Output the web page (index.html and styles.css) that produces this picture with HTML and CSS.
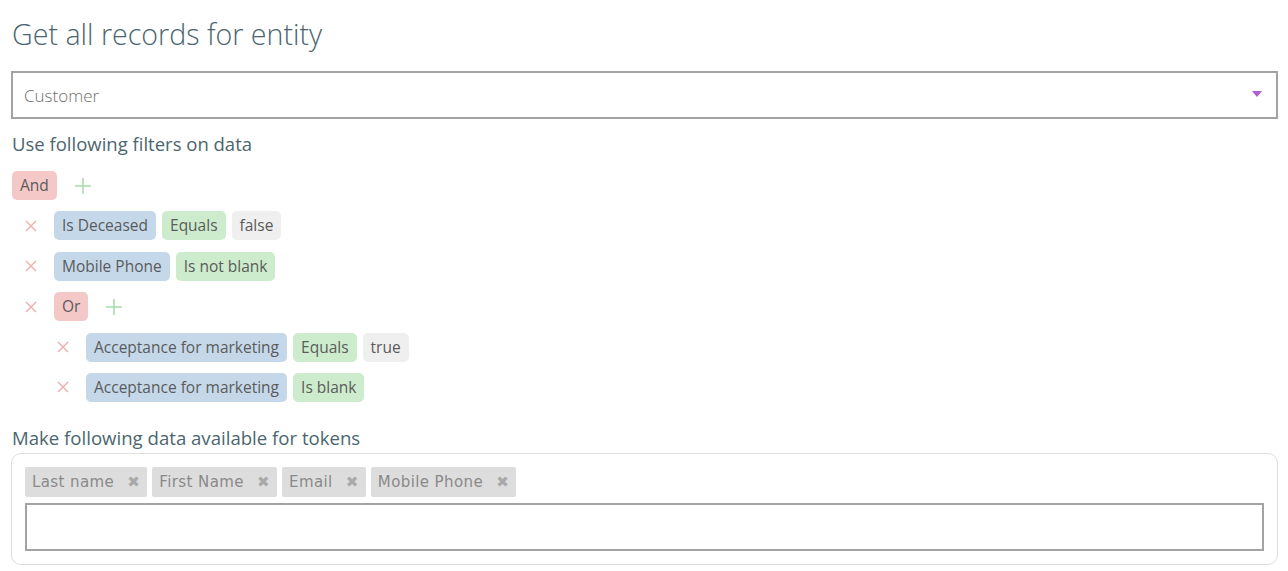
FILE: index.html
```html
<!DOCTYPE html>
<html>
<head>
<meta charset="utf-8">
<link rel="stylesheet" href="styles.css">
</head>
<body>
<div class="page">
  <h1 class="title">Get all records for entity</h1>
  <div class="select">
    <span class="select-value">Customer</span>
    <svg class="caret" width="10" height="6" viewBox="0 0 10 6"><path d="M0 0 H10 L5 6 Z" fill="#b05cd6"/></svg>
  </div>
  <div class="label">Use following filters on data</div>
  <div class="filters">
    <div class="row">
      <span class="chip pink">And</span>
      <span class="plus"><svg width="18" height="18" viewBox="0 0 18 18"><path d="M9 1V17M1 9H17" stroke="#a8dcaa" stroke-width="1.6"/></svg></span>
    </div>
    <div class="row l1">
      <span class="x"><svg width="14" height="14" viewBox="0 0 14 14"><path d="M2 2L12 12M12 2L2 12" stroke="#f0b4b4" stroke-width="1.6"/></svg></span>
      <span class="chip blue">Is Deceased</span>
      <span class="chip green">Equals</span>
      <span class="chip gray">false</span>
    </div>
    <div class="row l1">
      <span class="x"><svg width="14" height="14" viewBox="0 0 14 14"><path d="M2 2L12 12M12 2L2 12" stroke="#f0b4b4" stroke-width="1.6"/></svg></span>
      <span class="chip blue">Mobile Phone</span>
      <span class="chip green">Is not blank</span>
    </div>
    <div class="row l1">
      <span class="x"><svg width="14" height="14" viewBox="0 0 14 14"><path d="M2 2L12 12M12 2L2 12" stroke="#f0b4b4" stroke-width="1.6"/></svg></span>
      <span class="chip pink">Or</span>
      <span class="plus"><svg width="18" height="18" viewBox="0 0 18 18"><path d="M9 1V17M1 9H17" stroke="#a8dcaa" stroke-width="1.6"/></svg></span>
    </div>
    <div class="row l2">
      <span class="x"><svg width="14" height="14" viewBox="0 0 14 14"><path d="M2 2L12 12M12 2L2 12" stroke="#f0b4b4" stroke-width="1.6"/></svg></span>
      <span class="chip blue">Acceptance for marketing</span>
      <span class="chip green">Equals</span>
      <span class="chip gray">true</span>
    </div>
    <div class="row l2">
      <span class="x"><svg width="14" height="14" viewBox="0 0 14 14"><path d="M2 2L12 12M12 2L2 12" stroke="#f0b4b4" stroke-width="1.6"/></svg></span>
      <span class="chip blue">Acceptance for marketing</span>
      <span class="chip green">Is blank</span>
    </div>
  </div>
  <div class="label tokens-label">Make following data available for tokens</div>
  <div class="tokens-box">
    <div class="tokens">
      <span class="token">Last name <span class="tx">&#10006;</span></span>
      <span class="token">First Name <span class="tx">&#10006;</span></span>
      <span class="token">Email <span class="tx">&#10006;</span></span>
      <span class="token">Mobile Phone <span class="tx">&#10006;</span></span>
    </div>
    <div class="token-input"></div>
  </div>
</div>
</body>
</html>
```
FILE: styles.css
```css
* { box-sizing: border-box; }
body {
  margin: 0;
  background: #ffffff;
  font-family: "Open Sans", "Liberation Sans", sans-serif;
  color: #4b6670;
}
.page {
  padding: 14px 10px 0 11px;
}
.title {
  margin: 0 0 0 1px;
  font-size: 28.6px;
  font-weight: 300;
  line-height: 40px;
  color: #4b6670;
}
.select {
  margin-top: 17px;
  height: 48px;
  border: 2px solid #a3a3a3;
  display: flex;
  align-items: center;
  justify-content: space-between;
  padding: 0 14px 0 11px;
}
.select-value {
  font-size: 17px;
  font-weight: 300;
  color: #6f6f6f;
}
.caret { margin-top: -2px; }
.label {
  margin: 12px 0 0 1px;
  font-size: 18.5px;
  line-height: 26px;
  color: #4b6670;
}
.filters {
  margin-top: 14px;
  padding-left: 1px;
  display: flex;
  flex-direction: column;
  gap: 11.4px;
}
.row {
  display: flex;
  align-items: center;
  gap: 6px;
  height: 29px;
}
.row.l1 { padding-left: 12px; }
.row.l2 { padding-left: 44px; }
.x {
  width: 14px;
  height: 14px;
  display: flex;
  margin-right: 10px;
}
.plus {
  display: flex;
  margin-left: 11px;
}
.chip {
  height: 29px;
  line-height: 29px;
  padding: 0 8px;
  border-radius: 5px;
  font-size: 15.5px;
  color: #5b5b5b;
}
.chip.pink { background: #f5c8c8; }
.chip.blue { background: #c4d8ea; }
.chip.green { background: #cdeccd; }
.chip.gray { background: #efefef; }
.tokens-label { margin-top: 23px; font-size: 18.6px; }
.tokens-box {
  margin-top: 2px;
  height: 112px;
  border: 1px solid #dedede;
  border-radius: 10px;
  padding: 13px 13px 0 13px;
}
.tokens {
  display: flex;
  gap: 5px;
}
.token {
  height: 30px;
  line-height: 30px;
  padding: 0 7px 0 7px;
  background: #dddddd;
  color: #8a8a8a;
  font-family: "DejaVu Sans", "Verdana", sans-serif;
  font-size: 15px;
  letter-spacing: 0.4px;
  border-radius: 2px;
}
.tx {
  margin-left: 8px;
  color: #a9a9a9;
  font-size: 15px;
}
.token-input {
  margin-top: 6px;
  height: 48px;
  border: 2px solid #a3a3a3;
}
```
